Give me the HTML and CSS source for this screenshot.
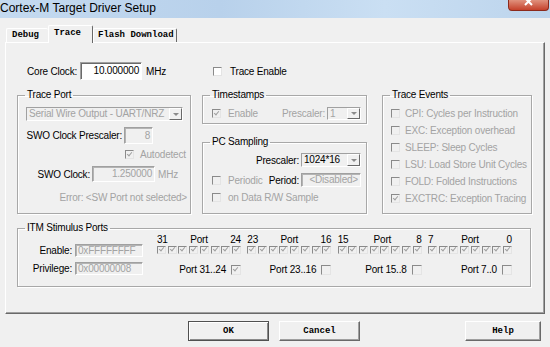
FILE: index.html
```html
<!DOCTYPE html>
<html lang="en">
<head>
    <meta charset="UTF-8">
    <meta name="viewport" content="width=device-width, initial-scale=1.0">
    <title>Cortex-M Target Driver Setup</title>
    <link rel="stylesheet" href="styles.css">
</head>
<body>
<div class="titlebar">
    <span class="caption">Cortex-M Target Driver Setup</span>
    <span class="close">
        <svg width="39" height="10" viewBox="0 0 39 10"><path d="M16 -2 L23 5 M23 -2 L16 5" stroke="#fff" stroke-width="2"/></svg>
    </span>
</div>

<div class="tabs">
    <div class="tab debug">Debug</div>
    <div class="tab active">Trace</div>
    <div class="tab flash">Flash Download</div>
</div>

<div class="panel">
    <div class="top-row">
        <div class="core">
            <span>Core Clock:</span>
            <span class="edit clock">10.000000</span>
            <span>MHz</span>
        </div>
        <div class="check-row trace-enable"><span class="cb white"></span><span class="gap8">Trace Enable</span></div>
    </div>

    <div class="groups">
        <fieldset class="grp col-port">
            <legend>Trace Port</legend>
            <div class="combo wide"><span class="val dim">Serial Wire Output - UART/NRZ</span><span class="drop"><i></i></span></div>
            <div class="field-row presc"><span class="lbl">SWO Clock Prescaler:</span><span class="edit num dim">8</span></div>
            <div class="check-row auto"><span class="cb on"></span><span class="dim gap6">Autodetect</span></div>
            <div class="field-row swo"><span class="lbl">SWO Clock:</span><span class="edit num dim">1.250000</span><span class="dim unit">MHz</span></div>
            <div class="error dim">Error: &lt;SW Port not selected&gt;</div>
        </fieldset>

        <div class="col-mid">
            <fieldset class="grp stamps">
                <legend>Timestamps</legend>
                <div class="check-row mid-row">
                    <span class="cb on"></span><span class="dim gap7">Enable</span>
                    <span class="dim push">Prescaler:</span>
                    <div class="combo small"><span class="val dim">1</span><span class="drop"><i></i></span></div>
                </div>
            </fieldset>
            <fieldset class="grp sampling">
                <legend>PC Sampling</legend>
                <div class="check-row pc-presc">
                    <span class="push">Prescaler:</span>
                    <div class="combo med"><span class="val">1024*16</span><span class="drop"><i></i></span></div>
                </div>
                <div class="check-row periodic">
                    <span class="cb"></span><span class="dim gap7">Periodic</span>
                    <span class="push">Period:</span>
                    <span class="edit med num dim">&lt;Disabled&gt;</span>
                </div>
                <div class="check-row ondata">
                    <span class="cb"></span><span class="dim gap7">on Data R/W Sample</span>
                </div>
            </fieldset>
        </div>

        <fieldset class="grp col-events">
            <legend>Trace Events</legend>
            <div class="events">
                <div class="event"><span class="cb"></span><span class="dim">CPI: Cycles per Instruction</span></div>
                <div class="event"><span class="cb"></span><span class="dim">EXC: Exception overhead</span></div>
                <div class="event"><span class="cb"></span><span class="dim">SLEEP: Sleep Cycles</span></div>
                <div class="event"><span class="cb"></span><span class="dim">LSU: Load Store Unit Cycles</span></div>
                <div class="event"><span class="cb"></span><span class="dim">FOLD: Folded Instructions</span></div>
                <div class="event"><span class="cb on"></span><span class="dim">EXCTRC: Exception Tracing</span></div>
            </div>
        </fieldset>
    </div>

    <fieldset class="grp itm">
        <legend>ITM Stimulus Ports</legend>
        <div class="itm-body">
            <div class="itm-left">
                <div class="itm-field"><span class="itm-lbl">Enable:</span><span class="edit itm-edit dim">0xFFFFFFFF</span></div>
                <div class="itm-field"><span class="itm-lbl">Privilege:</span><span class="edit itm-edit dim">0x00000008</span></div>
            </div>
            <div class="ports">
                <div class="port-grp">
                    <div class="port-head"><span>31</span><span>Port</span><span>24</span></div>
                    <div class="bits"><span class="bit"></span><span class="bit"></span><span class="bit"></span><span class="bit"></span><span class="bit"></span><span class="bit"></span><span class="bit"></span><span class="bit"></span></div>
                    <div class="port-priv"><span>Port 31..24</span><span class="cb big on"></span></div>
                </div>
                <div class="port-grp">
                    <div class="port-head"><span>23</span><span>Port</span><span>16</span></div>
                    <div class="bits"><span class="bit"></span><span class="bit"></span><span class="bit"></span><span class="bit"></span><span class="bit"></span><span class="bit"></span><span class="bit"></span><span class="bit"></span></div>
                    <div class="port-priv"><span>Port 23..16</span><span class="cb big"></span></div>
                </div>
                <div class="port-grp">
                    <div class="port-head"><span>15</span><span>Port</span><span>8</span></div>
                    <div class="bits"><span class="bit"></span><span class="bit"></span><span class="bit"></span><span class="bit"></span><span class="bit"></span><span class="bit"></span><span class="bit"></span><span class="bit"></span></div>
                    <div class="port-priv"><span>Port 15..8</span><span class="cb big"></span></div>
                </div>
                <div class="port-grp">
                    <div class="port-head"><span>7</span><span>Port</span><span>0</span></div>
                    <div class="bits"><span class="bit"></span><span class="bit"></span><span class="bit"></span><span class="bit"></span><span class="bit"></span><span class="bit"></span><span class="bit"></span><span class="bit"></span></div>
                    <div class="port-priv"><span>Port 7..0</span><span class="cb big"></span></div>
                </div>
            </div>
        </div>
    </fieldset>
</div>

<div class="buttons">
    <button class="cmd default">OK</button>
    <button class="cmd">Cancel</button>
    <button class="cmd help">Help</button>
</div>
</body>
</html>
```

FILE: styles.css
```css
body {
    margin: 0;
    width: 550px;
    height: 347px;
    overflow: hidden;
    background-color: #f0f0f0;
    font-family: "Liberation Sans", Arial, sans-serif;
    font-size: 10px;
    letter-spacing: -0.2px;
    color: #000;
}

/* title bar */
.titlebar {
    height: 18px;
    display: flex;
    justify-content: space-between;
    align-items: flex-start;
    background: linear-gradient(to right, #c4daf0, #b8d1eb 40%, #cadff3 70%, #bcd4ec);
}
.caption {
    font-size: 12px;
    letter-spacing: 0;
    line-height: 17px;
}
.close {
    display: block;
    width: 39px;
    height: 10px;
    margin-right: 1px;
    border: 1px solid #8b2a1c;
    border-top: none;
    border-radius: 0 0 4px 4px;
    background: linear-gradient(#e0917d, #c5412b);
    overflow: hidden;
}
.close svg {
    display: block;
}

/* tabs */
.tabs {
    height: 24px;
    display: flex;
    align-items: flex-end;
    padding-left: 6px;
}
.tab {
    box-sizing: border-box;
    height: 14px;
    padding-left: 5px;
    border-top: 1px solid #fff;
    border-left: 1px solid #fff;
    border-right: 1px solid #696969;
    border-radius: 2px 2px 0 0;
    font-family: "Liberation Mono", monospace;
    font-weight: bold;
    font-size: 9px;
    letter-spacing: 0;
    line-height: 13px;
    background-color: #f0f0f0;
}
.tab.debug {
    width: 42px;
    border-right: none;
}
.tab.active {
    width: 45px;
    height: 18px;
    margin-bottom: -1px;
    line-height: 15px;
    position: relative;
    z-index: 1;
}
.tab.flash {
    width: 84px;
    padding-left: 4px;
}

/* main panel */
.panel {
    box-sizing: border-box;
    width: 540px;
    height: 272px;
    margin-left: 5px;
    border: 1px solid;
    border-color: #fff #696969 #696969 #fff;
    box-shadow: inset -1px -1px 0 #a0a0a0;
    padding: 19px 0 0 11px;
}

.dim {
    color: #a3a3a3;
}

.edit {
    box-sizing: border-box;
    display: block;
    height: 16px;
    padding: 0 2px;
    border: 1px solid;
    border-color: #a0a0a0 #fff #fff #a0a0a0;
    box-shadow: inset 1px 1px 0 #b4b4b4;
    background-color: #f0f0f0;
    line-height: 14px;
    white-space: nowrap;
}
.edit.num {
    text-align: right;
}

.cb {
    box-sizing: border-box;
    display: inline-block;
    flex: none;
    width: 9px;
    height: 9px;
    border: 1px solid;
    border-color: #8a8a8a #e4e4e4 #e4e4e4 #8a8a8a;
    background-color: #f0f0f0;
    position: relative;
}
.cb.white {
    background-color: #fff;
}
.cb.on::after {
    content: "";
    position: absolute;
    left: 2px;
    top: 0;
    width: 2px;
    height: 4px;
    border: solid #a0a0a0;
    border-width: 0 1.5px 1.5px 0;
    transform: rotate(40deg);
}
.cb.big {
    width: 10px;
    height: 10px;
}

.check-row {
    display: flex;
    align-items: center;
}
.gap6 { margin-left: 6px; }
.gap7 { margin-left: 7px; }
.gap8 { margin-left: 8px; }
.push {
    margin-left: auto;
    margin-right: 2px;
}

.combo {
    box-sizing: border-box;
    display: flex;
    height: 14px;
    border: 1px solid;
    border-color: #a0a0a0 #fff #fff #a0a0a0;
    background-color: #f0f0f0;
}
.combo .val {
    flex: 1;
    padding-left: 2px;
    line-height: 12px;
    white-space: nowrap;
    overflow: hidden;
}
.combo .drop {
    box-sizing: border-box;
    width: 13px;
    display: flex;
    align-items: center;
    justify-content: center;
    border: 1px solid;
    border-color: #fff #696969 #696969 #fff;
    background-color: #f0f0f0;
}
.combo .drop i {
    width: 0;
    height: 0;
    border-left: 3px solid transparent;
    border-right: 3px solid transparent;
    border-top: 3px solid #8a8a8a;
}

/* top row */
.top-row {
    display: flex;
    height: 18px;
    align-items: center;
}
.core {
    box-sizing: border-box;
    width: 174px;
    display: flex;
    align-items: center;
    padding-left: 10px;
}
.core .clock {
    width: 62px;
    height: 18px;
    margin: 0 4px 0 3px;
    text-align: right;
    line-height: 16px;
    background-color: #fff;
    border-color: #a0a0a0 #fff #fff #a0a0a0;
    box-shadow: inset 1px 1px 0 #6a6a6a;
}
.trace-enable {
    margin-left: 11px;
    padding-left: 11px;
}

/* group boxes */
.grp {
    box-sizing: border-box;
    margin: 0;
    padding: 0;
    min-width: 0;
    border: 1px solid #a8a8a8;
    box-shadow: inset 1px 1px 0 #fff, 1px 1px 0 #fff;
}
.grp legend {
    margin-left: 7px;
    padding: 0 2px;
    line-height: 12px;
}

.groups {
    display: flex;
    height: 125px;
    margin-top: 9px;
}
.col-port {
    width: 174px;
    height: 125px;
}
.col-mid {
    width: 165px;
    margin-left: 11px;
    display: flex;
    flex-direction: column;
}
.col-events {
    width: 150px;
    height: 125px;
    margin-left: 15px;
}

/* trace port */
.combo.wide {
    width: 157px;
    margin: 6px 0 0 8px;
}
.field-row {
    display: flex;
    align-items: center;
    height: 17px;
}
.field-row .lbl {
    text-align: right;
    white-space: nowrap;
}
.field-row .edit {
    height: 17px;
    line-height: 15px;
    margin-left: 2px;
}
.presc {
    margin-top: 6px;
}
.presc .lbl {
    width: 104px;
}
.presc .edit {
    width: 29px;
}
.auto {
    margin-top: 5px;
    height: 11px;
    padding-left: 107px;
}
.swo {
    margin-top: 6px;
    height: 16px;
}
.swo .lbl {
    width: 72px;
}
.swo .edit {
    width: 63px;
    height: 16px;
    line-height: 14px;
}
.unit {
    margin-left: 3px;
}
.error {
    margin-top: 10px;
    text-align: right;
    padding-right: 3px;
    white-space: nowrap;
    line-height: 11px;
}

/* timestamps and pc sampling */
.stamps {
    height: 35px;
}
.mid-row {
    margin: 6px 5px 0 9px;
    height: 13px;
}
.combo.small {
    width: 34px;
    height: 13px;
}
.combo.small .val {
    line-height: 11px;
}
.sampling {
    height: 78px;
    margin-top: 12px;
}
.pc-presc {
    margin: 5px 5px 0 9px;
    height: 14px;
}
.combo.med {
    width: 60px;
}
.periodic {
    margin: 6px 5px 0 9px;
    height: 14px;
}
.edit.med {
    width: 60px;
    height: 14px;
    line-height: 12px;
}
.ondata {
    margin: 5px 5px 0 9px;
    height: 11px;
}

/* trace events */
.events {
    margin-top: 4px;
}
.event {
    display: flex;
    align-items: center;
    height: 17px;
    padding-left: 8px;
    white-space: nowrap;
}
.event .cb {
    margin-right: 5px;
}

/* ITM stimulus ports */
.itm {
    width: 514px;
    height: 65px;
    margin-top: 8px;
}
.itm-body {
    display: flex;
}
.itm-left {
    margin-top: 10px;
    display: flex;
    flex-direction: column;
    gap: 5px;
}
.itm-field {
    display: flex;
    align-items: center;
    height: 13px;
}
.itm-lbl {
    width: 54px;
    text-align: right;
}
.itm-edit {
    width: 68px;
    height: 13px;
    line-height: 11px;
    margin-left: 3px;
}
.ports {
    display: grid;
    grid-template-columns: repeat(4, 84px);
    column-gap: 6.33px;
    margin-left: 14px;
}
.port-head {
    display: flex;
    justify-content: space-between;
    height: 11px;
    line-height: 11px;
}
.bits {
    display: flex;
    justify-content: space-between;
    margin-top: 1px;
    height: 8px;
}
.bit {
    box-sizing: border-box;
    width: 9px;
    height: 8px;
    border: 1px solid;
    border-color: #8a8a8a #e4e4e4 #e4e4e4 #8a8a8a;
    position: relative;
}
.bit::after {
    content: "";
    position: absolute;
    left: 2px;
    top: -1px;
    width: 2px;
    height: 4px;
    border: solid #a0a0a0;
    border-width: 0 1.2px 1.2px 0;
    transform: rotate(40deg);
}
.port-priv {
    display: flex;
    justify-content: flex-end;
    align-items: center;
    gap: 5px;
    height: 11px;
    margin-top: 10px;
    white-space: nowrap;
}

/* dialog buttons */
.buttons {
    display: flex;
    padding: 7px 9px 0 188px;
}
.cmd {
    box-sizing: border-box;
    width: 81px;
    height: 20px;
    padding: 0;
    margin: 0;
    border: 1px solid;
    border-color: #fff #696969 #696969 #fff;
    box-shadow: inset -1px -1px 0 #a0a0a0;
    background-color: #f0f0f0;
    font-family: "Liberation Mono", monospace;
    font-weight: bold;
    font-size: 9px;
    color: #000;
}
.cmd + .cmd {
    margin-left: 10px;
}
.cmd.default {
    border-color: #505050;
    box-shadow: inset 1px 1px 0 #fff, inset -1px -1px 0 #8a8a8a;
}
.cmd.help {
    width: 76px;
    margin-left: auto;
}
```
